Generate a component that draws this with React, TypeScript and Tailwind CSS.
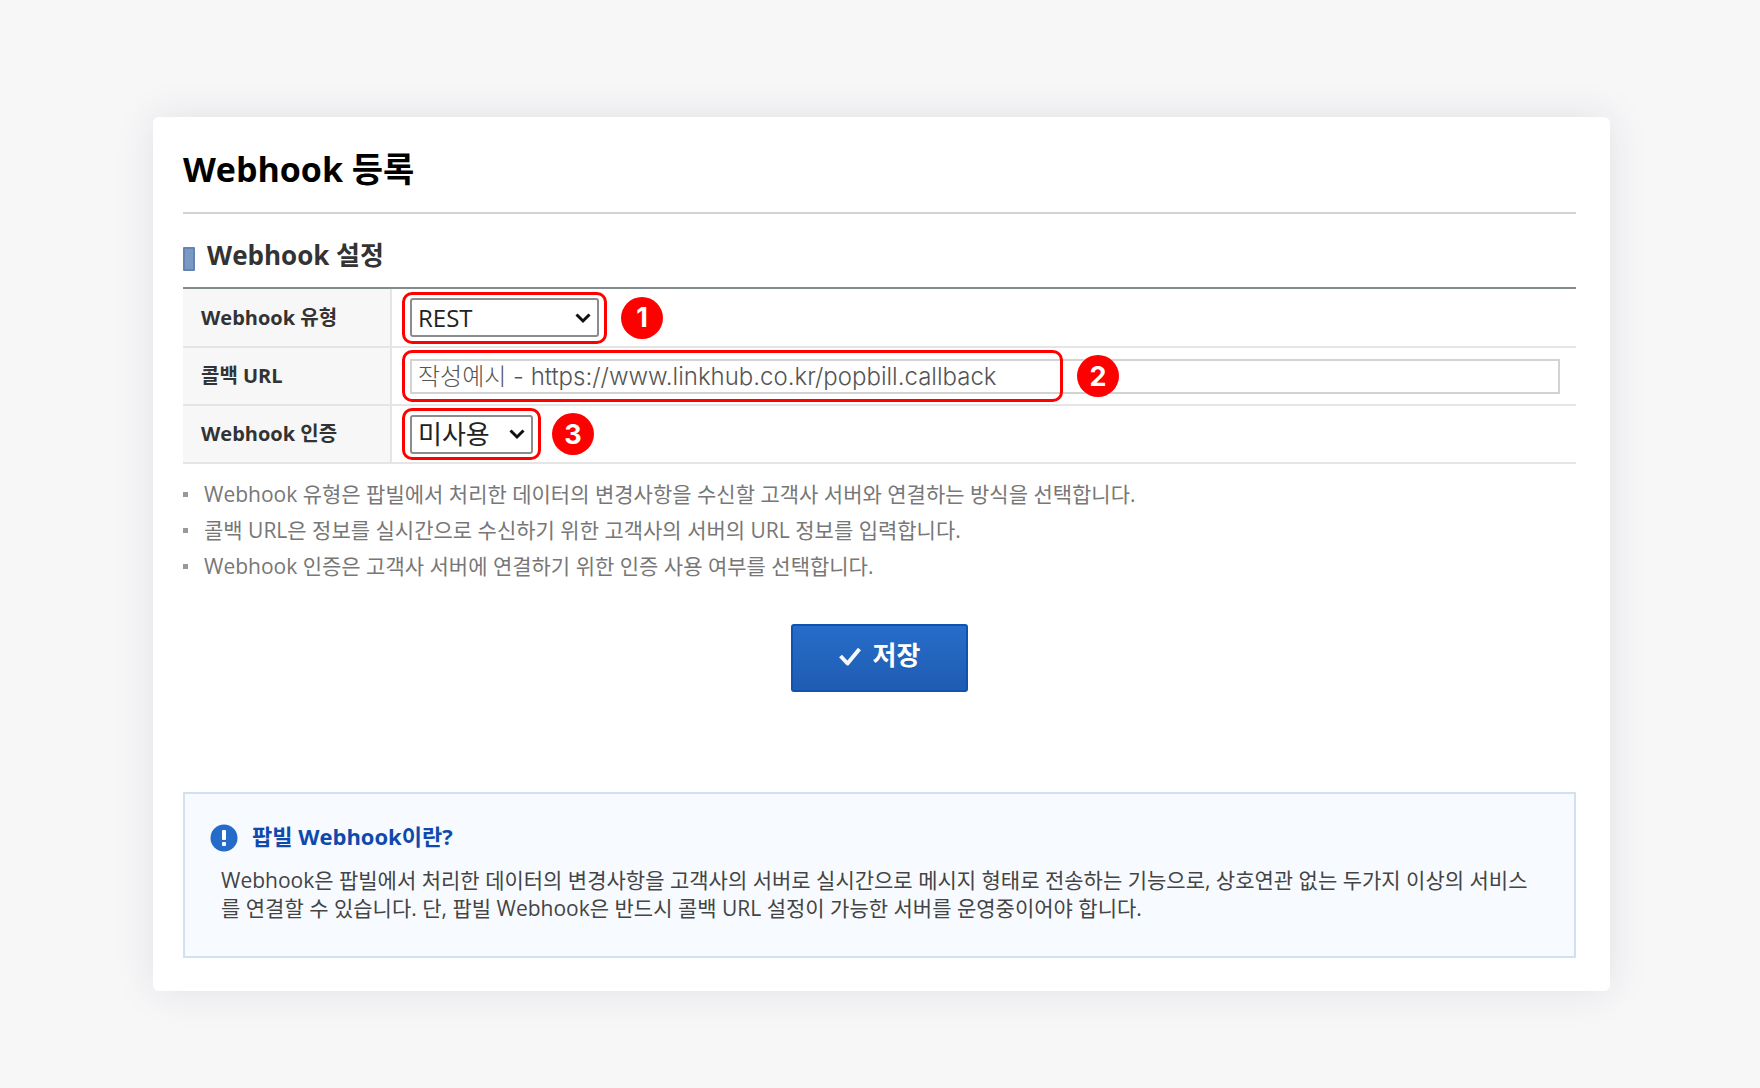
import type { ReactNode } from 'react';

const notes = [
    'Webhook 유형은 팝빌에서 처리한 데이터의 변경사항을 수신할 고객사 서버와 연결하는 방식을 선택합니다.',
    '콜백 URL은 정보를 실시간으로 수신하기 위한 고객사의 서버의 URL 정보를 입력합니다.',
    'Webhook 인증은 고객사 서버에 연결하기 위한 인증 사용 여부를 선택합니다.',
];

/* Red outline with a numbered badge, laid over a form control */
function Callout({
    step,
    size,
    gap = 'ml-[17px]',
}: {
    step: number;
    size: string;
    gap?: string;
}) {
    return (
        <div
            aria-hidden="true"
            className={`absolute -left-2 top-1/2 h-[52px] -translate-y-1/2 rounded-[10px] border-[3px] border-[#ff0000] pointer-events-none ${size}`}
        >
            <span
                className={`absolute left-full top-1/2 -translate-y-1/2 flex items-center justify-center size-[42px] rounded-full bg-[#ff0000] text-white text-[27px] leading-none font-bold font-['Inter',sans-serif] ${gap}`}
            >
                {step}
            </span>
        </div>
    );
}

function Chevron() {
    return (
        <svg
            className="absolute right-2 top-1/2 -translate-y-1/2 pointer-events-none"
            width="16"
            height="12"
            viewBox="0 0 16 12"
            fill="none"
            stroke="#111"
            strokeWidth="3"
        >
            <path d="M1.5 2.5 8 9l6.5-6.5" />
        </svg>
    );
}

function Row({
    id,
    label,
    children,
}: {
    id: string;
    label: string;
    children: ReactNode;
}) {
    return (
        <tr className="h-[58px] border-b-2 border-[#e5e5e5]">
            <th
                scope="row"
                className="w-[208px] bg-[#f7f7f7] border-r-2 border-[#e5e5e5] pl-[18px] text-left font-bold text-[20px] leading-6 text-[#333]"
            >
                <label htmlFor={id}>{label}</label>
            </th>
            <td className="pl-[18px] pr-4">{children}</td>
        </tr>
    );
}

function App() {
    return (
        <div className="min-h-screen bg-[#f7f7f8] pt-[117px] pb-24 pl-[153px] pr-[150px] font-['Open_Sans','Noto_Sans_CJK_KR',sans-serif]">
            <main className="bg-white rounded-md pl-[30px] pr-[34px] pb-[33px] shadow-[0_0_40px_rgba(30,40,70,0.1)]">
                <h1 className="pt-8 pb-[23px] text-[34px] leading-10 font-bold text-black border-b-2 border-[#d3d3d3]">
                    Webhook 등록
                </h1>

                {/* Settings form */}
                <h2 className="flex items-end gap-3 pt-[25px] pb-4 text-[26px] leading-8 font-bold text-[#333]">
                    <span className="w-3 h-6 rounded-[1px] border-2 border-[#6484b3] bg-[#7b99c2]" />
                    Webhook 설정
                </h2>
                <div className="border-t-2 border-[#838b8c]">
                    <table className="w-full border-collapse">
                        <tbody>
                            <Row id="type" label="Webhook 유형">
                                <div className="relative w-[189px]">
                                    <select
                                        id="type"
                                        className="block appearance-none w-full h-[39px] pl-[6px] rounded-[3px] border-2 border-[#8c8c8c] bg-white text-[24px] leading-8 text-[#222]"
                                    >
                                        <option>REST</option>
                                    </select>
                                    <Chevron />
                                    <Callout step={1} size="w-[205px]" />
                                </div>
                            </Row>
                            <Row id="url" label="콜백 URL">
                                <div className="relative">
                                    <input
                                        id="url"
                                        type="text"
                                        placeholder="작성예시 - https://www.linkhub.co.kr/popbill.callback"
                                        className="block w-full h-[35px] pl-[6px] border-2 border-[#d3d3d3] text-[24px] leading-7 font-light placeholder:text-[#555] font-['Inter','Noto_Sans_CJK_KR',sans-serif]"
                                    />
                                    <Callout step={2} size="w-[661px]" />
                                </div>
                            </Row>
                            <Row id="auth" label="Webhook 인증">
                                <div className="relative w-[123px]">
                                    <select
                                        id="auth"
                                        className="block appearance-none w-full h-[39px] pl-[6px] rounded-[3px] border-2 border-[#8c8c8c] bg-white text-[26px] leading-8 text-[#222]"
                                    >
                                        <option>미사용</option>
                                    </select>
                                    <Chevron />
                                    <Callout step={3} size="w-[139px]" gap="ml-[14px]" />
                                </div>
                            </Row>
                        </tbody>
                    </table>
                </div>

                <ul className="mt-3 text-[21px] leading-9 text-[#777]">
                    {notes.map((note) => (
                        <li key={note} className="flex items-center gap-4">
                            <span className="size-[5px] shrink-0 bg-[#999]" />
                            {note}
                        </li>
                    ))}
                </ul>

                <button
                    type="button"
                    className="mx-auto mt-10 flex items-center justify-center gap-3 w-[177px] h-[68px] pb-[6px] rounded-[3px] border-2 border-[#1152b0] bg-linear-to-b from-[#266dc9] to-[#1f5cb3] text-white text-[26px] leading-8 font-bold text-shadow-2xs"
                >
                    <svg
                        className="mt-1"
                        width="22"
                        height="20"
                        viewBox="0 0 22 20"
                        fill="none"
                        stroke="#f4f7fc"
                        strokeWidth="4"
                        strokeLinejoin="round"
                    >
                        <path d="M1.5 9 8.5 16.5 20.5 2" />
                    </svg>
                    저장
                </button>

                {/* Info box */}
                <section className="mt-[100px] min-h-[166px] pt-[26px] pl-[25px] pr-8 border-2 border-[#d0e2f2] bg-[#f7fbff]">
                    <h3 className="flex items-center gap-[14px] text-[22px] leading-8 font-bold text-[#1049ac]">
                        <svg className="mt-1" width="28" height="28" viewBox="0 0 28 28">
                            <circle cx="14" cy="14" r="13.5" fill="#256bc9" />
                            <rect x="12" y="6" width="4" height="10" rx="1" fill="#fff" />
                            <rect x="12" y="18" width="4" height="4" rx="1" fill="#fff" />
                        </svg>
                        팝빌 Webhook이란?
                    </h3>
                    <p className="mt-[14px] pl-[11px] text-[21px] leading-7 text-[#444] break-all">
                        Webhook은 팝빌에서 처리한 데이터의 변경사항을 고객사의
                        서버로 실시간으로 메시지 형태로 전송하는 기능으로,
                        상호연관 없는 두가지 이상의 서비스를 연결할 수 있습니다.
                        단, 팝빌 Webhook은 반드시 콜백 URL 설정이 가능한 서버를
                        운영중이어야 합니다.
                    </p>
                </section>
            </main>
        </div>
    );
}

export default App;
